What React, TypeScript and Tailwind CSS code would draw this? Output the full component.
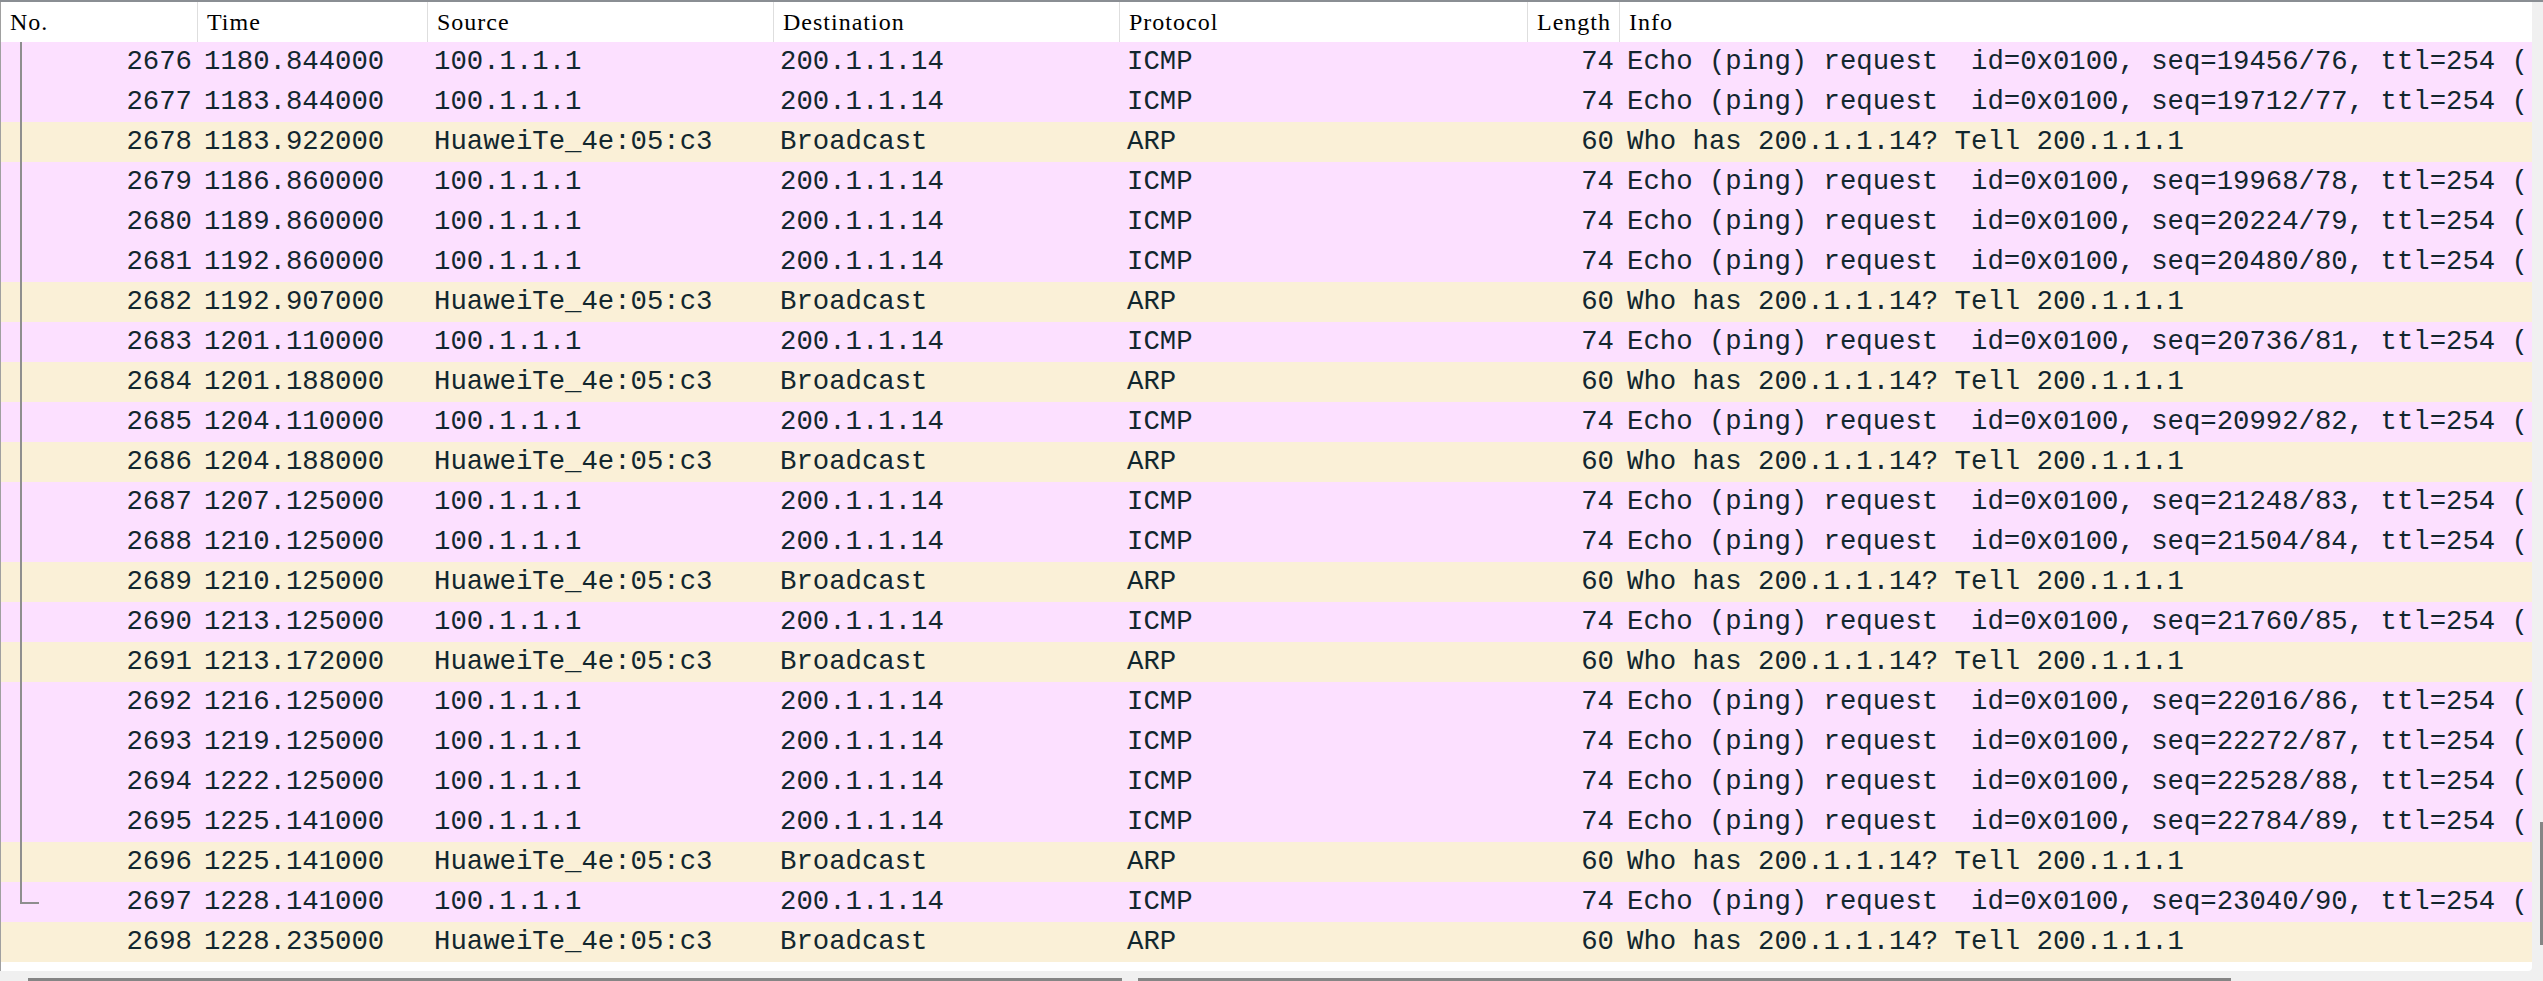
import React from 'react';

type Packet = {
  no: number;
  time: string;
  source: string;
  dest: string;
  proto: 'ICMP' | 'ARP';
  length: number;
  info: string;
};

const echo = (seq: string) => `Echo (ping) request  id=0x0100, seq=${seq}, ttl=254 (`;
const arpInfo = 'Who has 200.1.1.14? Tell 200.1.1.1';

const icmp = (no: number, time: string, seq: string): Packet => ({
  no,
  time,
  source: '100.1.1.1',
  dest: '200.1.1.14',
  proto: 'ICMP',
  length: 74,
  info: echo(seq),
});

const arp = (no: number, time: string): Packet => ({
  no,
  time,
  source: 'HuaweiTe_4e:05:c3',
  dest: 'Broadcast',
  proto: 'ARP',
  length: 60,
  info: arpInfo,
});

const packets: Packet[] = [
  icmp(2676, '1180.844000', '19456/76'),
  icmp(2677, '1183.844000', '19712/77'),
  arp(2678, '1183.922000'),
  icmp(2679, '1186.860000', '19968/78'),
  icmp(2680, '1189.860000', '20224/79'),
  icmp(2681, '1192.860000', '20480/80'),
  arp(2682, '1192.907000'),
  icmp(2683, '1201.110000', '20736/81'),
  arp(2684, '1201.188000'),
  icmp(2685, '1204.110000', '20992/82'),
  arp(2686, '1204.188000'),
  icmp(2687, '1207.125000', '21248/83'),
  icmp(2688, '1210.125000', '21504/84'),
  arp(2689, '1210.125000'),
  icmp(2690, '1213.125000', '21760/85'),
  arp(2691, '1213.172000'),
  icmp(2692, '1216.125000', '22016/86'),
  icmp(2693, '1219.125000', '22272/87'),
  icmp(2694, '1222.125000', '22528/88'),
  icmp(2695, '1225.141000', '22784/89'),
  arp(2696, '1225.141000'),
  icmp(2697, '1228.141000', '23040/90'),
  arp(2698, '1228.235000'),
];

const headers = [
  { label: 'No.', w: 'w-[197px]' },
  { label: 'Time', w: 'w-[230px]' },
  { label: 'Source', w: 'w-[346px]' },
  { label: 'Destination', w: 'w-[346px]' },
  { label: 'Protocol', w: 'w-[408px]' },
  { label: 'Length', w: 'w-[92px]' },
];

// related-packet bracket drawn in the No. column
function TreeMark({ index }: { index: number }) {
  if (index < 21) {
    return <div className="ml-[19px] w-[2px] self-stretch bg-[#8e8e8e]" />;
  }
  if (index === 21) {
    return <div className="ml-[19px] w-[19px] h-[22px] self-start border-l-2 border-b-2 border-[#8e8e8e]" />;
  }
  return null;
}

export default function App() {
  return (
    <div className="w-[2543px] h-[981px] flex flex-col bg-[#f0f0f0] overflow-hidden">
      <div className="h-[2px] bg-[#8a8e93]" />
      <div className="flex flex-1 min-h-0">
        <div className="w-px bg-[#a0a0a0]" />
        <div className="flex-1 flex flex-col min-w-0">
          <div className="flex-1 flex flex-col bg-white rounded-br-[4px] min-h-0">
            {/* Header */}
            <div className="h-[40px] flex text-black text-[24px] tracking-[1px]" style={{ fontFamily: '"Liberation Serif", serif' }}>
              {headers.map((h) => (
                <div key={h.label} className={`${h.w} shrink-0 flex items-center pl-[9px] border-r border-[#dedede]`}>
                  {h.label}
                </div>
              ))}
              <div className="flex-1 flex items-center pl-[9px]">Info</div>
            </div>

            {/* Rows */}
            <div className="flex flex-col text-[#12272e] text-[27.3px] whitespace-pre" style={{ fontFamily: '"Liberation Mono", monospace' }}>
              {packets.map((p, i) => (
                <div key={p.no} className={`h-[40px] flex ${p.proto === 'ICMP' ? 'bg-[#fce0ff]' : 'bg-[#faf0d7]'}`}>
                  <div className="w-[197px] shrink-0 flex items-center">
                    <TreeMark index={i} />
                    <span className="ml-auto pr-[6px]">{p.no}</span>
                  </div>
                  <div className="w-[230px] shrink-0 flex items-center pl-[6px]">{p.time}</div>
                  <div className="w-[346px] shrink-0 flex items-center pl-[6px]">{p.source}</div>
                  <div className="w-[346px] shrink-0 flex items-center pl-[6px]">{p.dest}</div>
                  <div className="w-[408px] shrink-0 flex items-center pl-[7px]">{p.proto}</div>
                  <div className="w-[92px] shrink-0 flex items-center justify-end pr-[6px]">{p.length}</div>
                  <div className="flex-1 min-w-0 flex items-center pl-[7px]">{p.info}</div>
                </div>
              ))}
            </div>
            <div className="flex-1" />
          </div>
        </div>
        {/* Vertical scrollbar */}
        <div className="w-[11px] flex justify-end">
          <div className="w-[3px] mt-[820px] h-[123px] bg-[#858585]" />
        </div>
      </div>
      {/* Horizontal scrollbars */}
      <div className="h-[10px] flex items-end pl-[28px] gap-[16px]">
        <div className="w-[1094px] h-[3px] bg-[#858585]" />
        <div className="w-[1093px] h-[3px] bg-[#858585]" />
      </div>
    </div>
  );
}
